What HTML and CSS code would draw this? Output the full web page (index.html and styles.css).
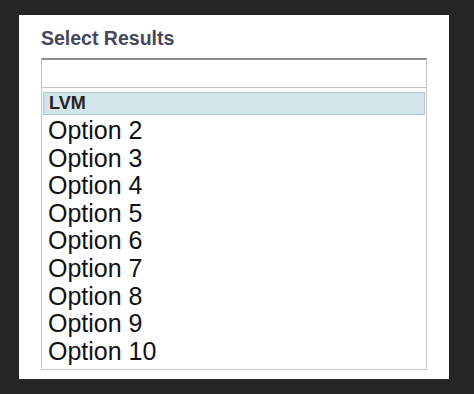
FILE: index.html
```html
<!DOCTYPE html>
<html>

<head>
  <title>Select Results</title>
  <meta name="viewport" content="width=device-width, initial-scale=1">
  <link rel="stylesheet" href="styles.css">
</head>

<body>
  <div class="panel">
    <h2 class="panel-title">Select Results</h2>
    <input class="search" type="text">
    <div class="results">
      <div class="result-group">LVM</div>
      <ul class="options">
        <li>Option 2</li>
        <li>Option 3</li>
        <li>Option 4</li>
        <li>Option 5</li>
        <li>Option 6</li>
        <li>Option 7</li>
        <li>Option 8</li>
        <li>Option 9</li>
        <li>Option 10</li>
      </ul>
    </div>
  </div>
</body>

</html>
```

FILE: styles.css
```css
html {
  font-family: "Liberation Sans", Arial, Helvetica, sans-serif;
}

body {
  margin: 0;
  background-color: #262626;
  padding: 15px 0 0 19px;
}

.panel {
  box-sizing: border-box;
  width: 430px;
  height: 364px;
  background-color: white;
  padding: 12px 0 0 22px;
}

.panel-title {
  margin: 0;
  font-size: 19.5px;
  line-height: 22px;
  font-weight: bold;
  color: #45475a;
}

.search {
  display: block;
  box-sizing: border-box;
  width: 386px;
  height: 30px;
  margin: 9px 0 0 0;
  padding: 0 6px;
  border: 1px solid #c4c4c4;
  border-top: 2px solid #8c8c8c;
  background: white;
  outline: none;
}

.results {
  box-sizing: border-box;
  width: 386px;
  height: 282px;
  border: 1px solid #c8c8c8;
  border-top: none;
  padding: 4px 1px 0 1px;
}

.result-group {
  box-sizing: border-box;
  height: 23px;
  line-height: 21px;
  padding: 0 5px;
  font-size: 18px;
  font-weight: bold;
  color: #222;
  background-color: #d3e4eb;
  border: 1px solid #adc6d1;
}

.options {
  list-style: none;
  margin: 0;
  padding: 2px 0 0 0;
}

.options li {
  padding: 0 5px;
  font-size: 25px;
  line-height: 27.6px;
  color: #111;
}
```
